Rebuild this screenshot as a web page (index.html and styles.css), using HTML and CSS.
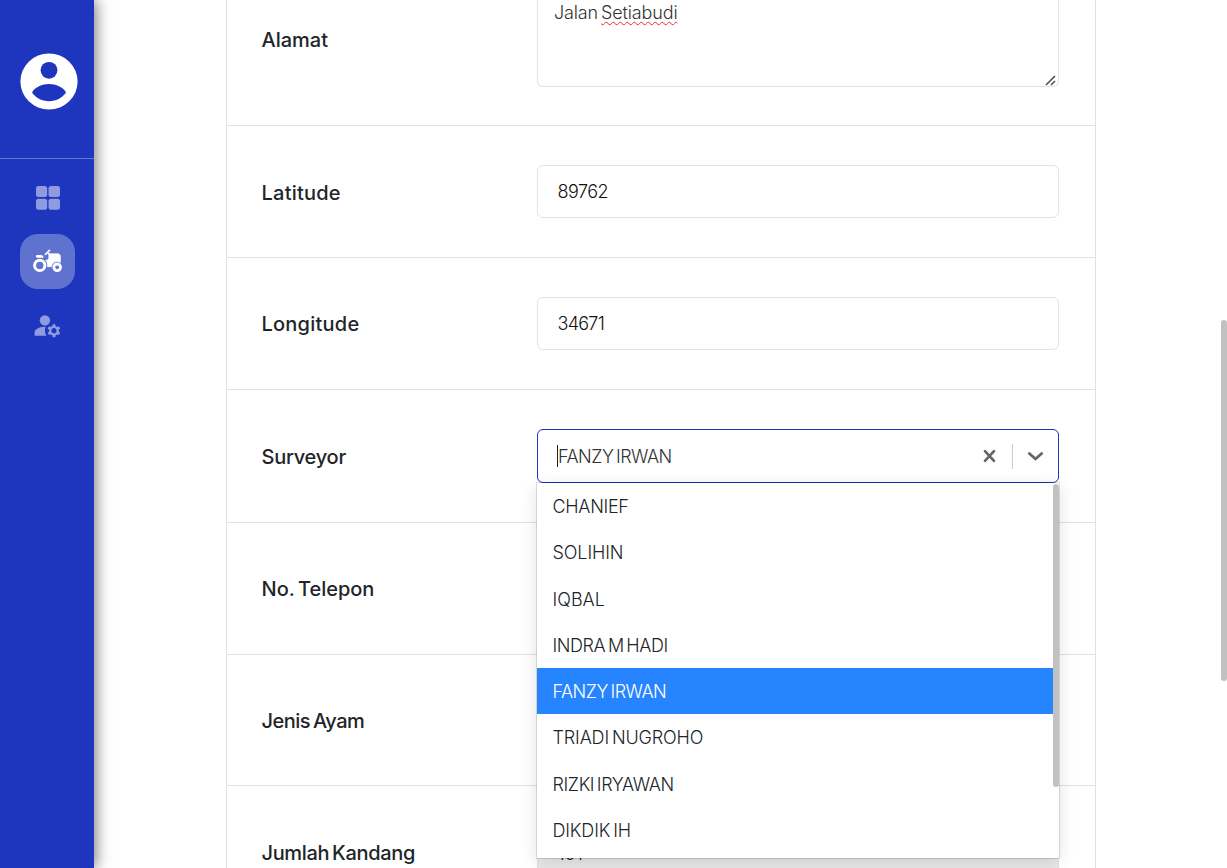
FILE: index.html
```html
<!DOCTYPE html>
<html lang="id">
<head>
<meta charset="utf-8">
<title>Data Peternak</title>
<link rel="stylesheet" href="styles.css">
</head>
<body>
<div class="app">
  <aside class="sidebar">
    <div class="profile">
      <svg class="avatar" viewBox="0 0 58 57"><ellipse cx="29" cy="28.5" rx="28.6" ry="28.1" fill="#fff"/><circle cx="29" cy="17.3" r="8.4" fill="#1d36bd"/><path d="M12 39.5C15 34 22 31 29 31s14 3 17 8.500C42 45 36 48.200 29 48.200S16 45 12 39.500z" fill="#1d36bd"/></svg>
    </div>
    <nav class="menu">
      <a class="menu-item"><svg viewBox="0 0 24 24" class="grid-icon"><rect width="11.2" height="11" rx="2.500"/><rect x="12.500" width="11.500" height="11" rx="2.500"/><rect y="12.700" width="11.200" height="11" rx="2.500"/><rect x="12.500" y="12.700" width="11.500" height="11" rx="2.500"/></svg></a>
      <a class="menu-item active"><svg viewBox="0 0 24 24"><path stroke="#fff" stroke-width=".5" d="M19.500 12c.93 0 1.780.28 2.500.76V8c0-1.100-.9-2-2-2h-6.290l-1.060-1.060 1.410-1.410-.71-.71-3.530 3.530.71.71 1.410-1.410L13 6.710V9c0 1.100-.9 2-2 2h-.54c.95 1.060 1.540 2.460 1.540 4 0 .34-.04.67-.09 1h3.140c.25-2.250 2.140-4 4.450-4z"/><path d="M19.500 12.800a3.700 3.700 0 1 0 0 7.400 3.700 3.700 0 0 0 0-7.400zm0 5.200c-.83 0-1.500-.67-1.500-1.500s.67-1.500 1.500-1.500 1.500.67 1.500 1.500-.67 1.500-1.500 1.500zM4 9h5c0-1.100-.9-2-2-2H4c-.55 0-1 .45-1 1s.45 1 1 1z"/><circle cx="6" cy="15" r="4" fill="none" stroke="#fff" stroke-width="2.300"/></svg></a>
      <a class="menu-item"><svg viewBox="0 0 24 24"><circle cx="10" cy="8" r="4"/><path d="M10.670 13.020C10.450 13.010 10.230 13 10 13c-2.420 0-4.680.67-6.610 1.820-.88.52-1.390 1.500-1.390 2.530V20h9.260c-.79-1.130-1.260-2.510-1.260-4 0-1.070.25-2.070.67-2.980z"/><path d="M20.750 16c0-.22-.03-.42-.06-.63l1.140-1.010-1-1.730-1.450.49c-.32-.27-.68-.48-1.080-.63L18 11h-2l-.3 1.490c-.4.15-.76.36-1.080.63l-1.450-.49-1 1.730 1.140 1.010c-.03.21-.06.41-.06.63s.03.42.06.63l-1.140 1.010 1 1.730 1.450-.49c.32.27.68.48 1.080.63L16 21h2l.3-1.490c.4-.15.76-.36 1.080-.63l1.450.49 1-1.730-1.140-1.010c.03-.21.06-.41.06-.63zM17 18c-1.100 0-2-.9-2-2s.9-2 2-2 2 .9 2 2-.9 2-2 2z"/></svg></a>
    </nav>
  </aside>

  <main class="content">
    <section class="form">
      <div class="row row-address"><label class="label">Alamat</label>
        <div class="textarea">Jalan <span class="misspelt">Setiabudi</span>
          <svg class="grip" viewBox="0 0 11 11"><path d="M1 10l9-9M6 10l4-4" stroke="#555" stroke-width="1.700"/></svg></div></div>
      <div class="row"><label class="label l-latitude">Latitude</label><div class="input t-lat">89762</div></div>
      <div class="row row-raised"><label class="label l-longitude">Longitude</label><div class="input t-long">34671</div></div>
      <div class="row row-select row-raised"><label class="label l-surveyor">Surveyor</label>
        <div class="select">
          <div class="select-value"><i class="caret"></i><span class="o-fanzy">FANZY IRWAN</span></div>
          <svg class="clear" viewBox="0 0 12 13"><path d="M1.800 2l8.400 9M10.200 2l-8.400 9" stroke="#666" stroke-width="2.500" stroke-linecap="round"/></svg>
          <i class="separator"></i>
          <svg class="chevron" viewBox="0 0 16 10"><path d="M2.200 2.200L8 7.300l5.800-5.100" fill="none" stroke="#666" stroke-width="2.600" stroke-linecap="round" stroke-linejoin="round"/></svg>
          <div class="dropdown">
            <div class="option"><span class="o-chanief">CHANIEF</span></div>
            <div class="option"><span class="o-solihin">SOLIHIN</span></div>
            <div class="option"><span class="o-iqbal">IQBAL</span></div>
            <div class="option"><span class="o-indra">INDRA M HADI</span></div>
            <div class="option selected"><span class="o-fanzy">FANZY IRWAN</span></div>
            <div class="option"><span class="o-triadi">TRIADI NUGROHO</span></div>
            <div class="option"><span class="o-rizki">RIZKI IRYAWAN</span></div>
            <div class="option"><span class="o-dikdik">DIKDIK IH</span></div>
            <i class="menu-scroll"></i>
          </div>
        </div></div>
      <div class="row row-raised"><label class="label">No. Telepon</label><div class="input"></div></div>
      <div class="row row-short row-raised"><label class="label l-jenis">Jenis Ayam</label><div class="input"></div></div>
      <div class="row"><label class="label l-jumlah">Jumlah Kandang</label><div class="input disabled">101</div></div>
    </section>
  </main>
  <i class="page-scroll"></i>
</div>
</body>
</html>
```
FILE: styles.css
```css
* { box-sizing: border-box; }
body { margin: 0; background: #fff; color: #212529; font-family: Inter, "Liberation Sans", sans-serif; word-spacing: -2px; }
svg { display: block; flex: none; }
.app { position: relative; display: flex; width: 1227px; height: 868px; overflow: hidden; }
.sidebar { width: 94px; height: 868px; flex: none; background: #1d36bd; box-shadow: 2px 0 14px rgba(0,0,0,.53); }
.profile { height: 159px; padding: 53px 0 0 20px; border-bottom: 1px solid #6477d1; }
.avatar { width: 58px; height: 57px; }
.menu { display: flex; flex-direction: column; align-items: center; gap: 9px; padding: 11px 0 0 1px; }
.menu-item { display: flex; width: 55px; height: 55px; align-items: center; justify-content: center; border-radius: 18px; fill: #8f9bde; }
.menu-item svg { width: 31px; height: 31px; }
.menu-item .grid-icon { width: 24px; height: 24px; margin-left: 1px; }
.menu-item.active { background: #6072d0; fill: #fff; }
.content { flex: 1; padding-left: 132px; }
.form { width: 870px; border: solid #dee2e6; border-width: 0 1px; }
.row { display: flex; height: 132px; align-items: center; padding: 0 36px 0 34px; border-bottom: 1px solid #dee2e6; }
.row-address { height: 126px; align-items: flex-start; }
.row-select { height: 133px; }
.row-short { height: 131px; }
.label { width: 276px; flex: none; padding: 3px 0 0 .5px; font-size: 20px; line-height: 30px; font-weight: 500; white-space: nowrap; }
.row-address .label { padding-top: 25px; }
.row-raised .label { padding-top: 1px; }
.l-latitude, .l-longitude { letter-spacing: .23px; }
.l-surveyor { letter-spacing: -.25px; }
.l-jenis { letter-spacing: -.5px; }
.l-jumlah { letter-spacing: -.35px; }
.input, .textarea, .select { width: 522px; flex: none; border: 1px solid #e2e2ec; border-radius: 6px; background: #fff; font-size: 18px; font-weight: 300; color: #111; white-space: nowrap; }
.input { height: 53px; padding: 0 19.500px; line-height: 51px; }
.input.disabled { padding-top: 2px; background: #e9e9e9; }
.t-lat { letter-spacing: -.5px; line-height: 52px; }
.t-long { letter-spacing: -.75px; }
.textarea { position: relative; height: 87px; border-top: 0; border-radius: 0 0 6px 6px; padding: 0 16px; line-height: 26px; letter-spacing: -.14px; color: #333; }
.misspelt { text-decoration: underline wavy #f22 1.250px; text-underline-offset: 2px; text-decoration-skip-ink: none; }
.grip { position: absolute; right: 2px; bottom: 0; width: 11px; height: 11px; }
.select { position: relative; display: flex; align-items: center; height: 54px; border-color: #1d36bd; color: #333; }
.select-value { display: flex; align-items: center; flex: 1; padding-left: 19px; }
.caret { width: 1px; height: 22px; background: #222; }
.clear { width: 13px; height: 14px; margin-right: 16px; }
.separator { width: 1px; height: 25px; background: #ccc; margin-right: 14px; }
.chevron { width: 17px; height: 11px; margin-right: 14px; }
.dropdown { position: absolute; z-index: 2; left: -1px; top: 53px; width: 522px; height: 375px; background: #fff; box-shadow: 0 0 0 1px rgba(0,0,0,.12), 0 4px 16px rgba(0,0,0,.13); }
.option { height: 46.250px; padding-left: 15.500px; line-height: 48px; color: #212529; }
.option.selected { width: 516px; background: #2684ff; color: #fff; }
.o-chanief { letter-spacing: -.3px; }
.o-solihin { letter-spacing: -.1px; }
.o-indra { letter-spacing: -.42px; }
.o-fanzy { letter-spacing: -.5px; }
.o-triadi { letter-spacing: -.15px; }
.o-rizki { letter-spacing: -.4px; }
.o-dikdik { letter-spacing: -.15px; }
.menu-scroll { position: absolute; right: 0; top: 1px; width: 6px; height: 303px; border-radius: 3px; background: #c1c1c1; }
.page-scroll { position: absolute; right: 0; top: 320px; width: 6px; height: 361px; border-radius: 3px; background: #c1c1c1; }
```
